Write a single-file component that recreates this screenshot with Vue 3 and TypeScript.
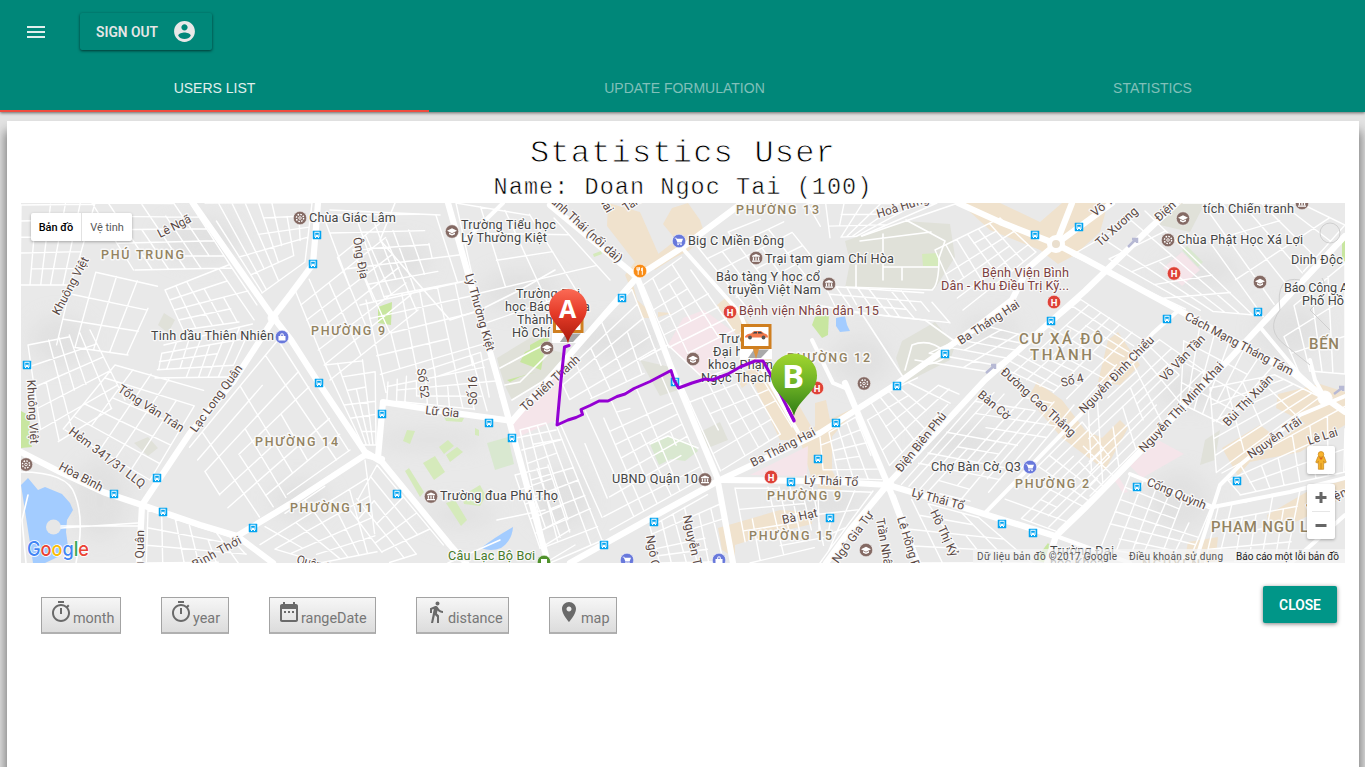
<script setup lang="ts">
type Pt = [number, number]
interface Label { t: string; x: number; y: number; w?: number; a?: number; k?: string }
interface Poi { x: number; y: number; k: string }

const tabs = ['USERS LIST', 'UPDATE FORMULATION', 'STATISTICS']
const actions = [
  { label: 'month', icon: 'timer', width: 80 },
  { label: 'year', icon: 'timer', width: 68 },
  { label: 'rangeDate', icon: 'calendar', width: 107 },
  { label: 'distance', icon: 'walk', width: 93 },
  { label: 'map', icon: 'pin', width: 68 },
]
const icons: Record<string, string> = {
  timer: 'M15 1H9v2h6V1zm-4 13h2V8h-2v6zm8.03-6.61l1.42-1.42c-.43-.51-.9-.99-1.41-1.41l-1.42 1.42C16.07 4.74 14.12 4 12 4c-4.97 0-9 4.03-9 9s4.02 9 9 9 9-4.03 9-9c0-2.12-.74-4.07-1.97-5.61zM12 20c-3.87 0-7-3.13-7-7s3.13-7 7-7 7 3.13 7 7-3.13 7-7 7z',
  calendar: 'M9 11H7v2h2v-2zm4 0h-2v2h2v-2zm4 0h-2v2h2v-2zm2-7h-1V2h-2v2H8V2H6v2H5c-1.11 0-1.99.9-1.99 2L3 20c0 1.1.89 2 2 2h14c1.1 0 2-.9 2-2V6c0-1.1-.9-2-2-2zm0 16H5V9h14v11z',
  walk: 'M13.5 5.5c1.1 0 2-.9 2-2s-.9-2-2-2-2 .9-2 2 .9 2 2 2zM9.8 8.9L7 23h2.1l1.8-8 2.1 2v6h2v-7.5l-2.1-2 .6-3C14.8 12 16.8 13 19 13v-2c-1.9 0-3.5-1-4.3-2.4l-1-1.6c-.4-.6-1-1-1.7-1-.3 0-.5.1-.8.1L6 8.3V13h2V9.6l1.8-.7',
  pin: 'M12 2C8.13 2 5 5.13 5 9c0 5.25 7 13 7 13s7-7.75 7-13c0-3.87-3.13-7-7-7zm0 9.5c-1.38 0-2.500-1.120-2.500-2.500s1.120-2.500 2.500-2.500 2.500 1.120 2.500 2.500-1.120 2.500-2.500 2.500z',
}

const thick: string[] = [
  'M193 203L273 317L291 340L318 382L365 452L382 462L450 545L466 563',
  'M273 317L290 295L313 264L318 203',
  'M273 320L233 382L190 433L142 505L139 563',
  'M21 452L60 472L103 492L142 505L200 525L237 536L273 563',
  'M237 536L290 504L365 455L382 459',
  'M378 457L383 402L440 411L512 421',
  'M448 203L498 380L548 563',
  'M512 421L580 343L638 276L683 247L742 203',
  'M550 205L637 277L671 367L717 477L733 563',
  'M570 563L640 524L720 480L820 433L898 383L982 323L1012 300L1028 268L1056 244',
  'M958 203L1000 222L1056 244L1085 259L1173 307L1293 373L1325 398L1345 412',
  'M1056 244L1072 203', 'M1056 244L1112 203',
  'M1177 203L1148 230L1085 291L985 380L888 484L850 530L826 563',
  'M720 480L820 481L888 485L965 508L1055 536',
  'M845 383L888 485L918 563',
  'M1047 563L1056 536L1085 508L1210 380L1262 324L1345 236',
]
const medium: string[] = [
  'M460 245L503 203', 'M683 249L740 313L760 365L798 432', 'M812 340L833 383L845 388',
  'M985 513L1085 410L1153 333L1180 309', 'M1213 507L1195 563', 'M1325 398L1300 375L1260 327',
  'M1325 398L1315 380L1310 360', 'M1213 507L1220 485L1240 465L1300 415L1345 396', 'M1345 478L1290 492L1213 507L1130 474',
  'M1291 563L1345 515', 'M1056 536L1130 563',
]

// Each block of side streets is a quadrilateral divided into uneven rows and columns.
const blocks: { q: [Pt, Pt, Pt, Pt]; u: number; v: number; s: number }[] = [
  { q: [[21, 205], [95, 203], [72, 285], [21, 285]], u: 5, v: 5, s: 3 },
  { q: [[92, 203], [190, 203], [232, 268], [135, 270]], u: 6, v: 5, s: 5 },
  { q: [[75, 268], [158, 285], [128, 355], [58, 345]], u: 4, v: 3, s: 8 },
  { q: [[205, 203], [312, 203], [305, 262], [262, 293]], u: 8, v: 5, s: 13 },
  { q: [[165, 290], [230, 265], [267, 318], [183, 330]], u: 6, v: 4, s: 11 },
  { q: [[164, 345], [252, 325], [228, 377], [155, 378]], u: 7, v: 4, s: 9 },
  { q: [[28, 345], [90, 330], [125, 400], [45, 450]], u: 6, v: 5, s: 4 },
  { q: [[115, 365], [205, 388], [150, 480], [65, 430]], u: 5, v: 5, s: 8 },
  { q: [[278, 340], [350, 450], [242, 530], [190, 448]], u: 7, v: 7, s: 6 },
  { q: [[295, 290], [380, 225], [418, 310], [330, 380]], u: 6, v: 6, s: 14 },
  { q: [[323, 215], [452, 215], [470, 280], [360, 305]], u: 8, v: 5, s: 21 },
  { q: [[366, 300], [473, 280], [491, 360], [384, 393]], u: 6, v: 5, s: 17 },
  { q: [[325, 365], [375, 358], [376, 445], [363, 445]], u: 4, v: 6, s: 5 },
  { q: [[388, 382], [490, 350], [507, 413], [385, 400]], u: 11, v: 4, s: 16 },
  { q: [[245, 540], [365, 460], [377, 552], [320, 563]], u: 6, v: 5, s: 12 },
  { q: [[377, 465], [443, 545], [390, 563], [350, 510]], u: 5, v: 4, s: 18 },
  { q: [[148, 510], [230, 537], [255, 563], [146, 563]], u: 6, v: 3, s: 11 },
  { q: [[456, 203], [554, 218], [610, 280], [480, 325]], u: 4, v: 4, s: 25 },
  { q: [[520, 430], [555, 422], [603, 540], [550, 563]], u: 4, v: 8, s: 22 },
  { q: [[560, 423], [661, 375], [705, 477], [610, 530]], u: 8, v: 8, s: 23 },
  { q: [[643, 285], [682, 258], [735, 330], [674, 360]], u: 4, v: 6, s: 28 },
  { q: [[556, 370], [632, 290], [662, 365], [573, 407]], u: 5, v: 5, s: 31 },
  { q: [[682, 385], [752, 362], [792, 427], [722, 470]], u: 6, v: 5, s: 33 },
  { q: [[697, 246], [775, 211], [820, 267], [746, 310]], u: 5, v: 5, s: 36 },
  { q: [[807, 203], [937, 203], [862, 236], [825, 238]], u: 7, v: 3, s: 38 },
  { q: [[825, 286], [923, 292], [950, 323], [840, 311]], u: 9, v: 3, s: 40 },
  { q: [[935, 250], [1000, 218], [1036, 252], [963, 310]], u: 6, v: 5, s: 42 },
  { q: [[915, 360], [986, 326], [1035, 338], [988, 371]], u: 5, v: 3, s: 44 },
  { q: [[860, 405], [918, 378], [960, 393], [890, 465]], u: 6, v: 4, s: 47 },
  { q: [[820, 437], [856, 418], [882, 480], [824, 478]], u: 4, v: 5, s: 49 },
  { q: [[984, 391], [1074, 405], [990, 506], [900, 484]], u: 9, v: 9, s: 53 },
  { q: [[1000, 367], [1080, 299], [1141, 338], [1080, 405]], u: 10, v: 6, s: 55 },
  { q: [[1088, 404], [1160, 340], [1210, 375], [1090, 496]], u: 8, v: 8, s: 57 },
  { q: [[994, 510], [1083, 423], [1120, 470], [1058, 530]], u: 8, v: 7, s: 60 },
  { q: [[895, 495], [978, 517], [1032, 563], [920, 563]], u: 5, v: 4, s: 65 },
  { q: [[735, 488], [812, 486], [825, 545], [750, 563]], u: 7, v: 7, s: 66 },
  { q: [[650, 527], [719, 488], [736, 563], [660, 563]], u: 6, v: 5, s: 68 },
  { q: [[818, 490], [873, 491], [833, 545], [820, 563]], u: 3, v: 3, s: 69 },
  { q: [[515, 475], [548, 465], [575, 545], [545, 563]], u: 3, v: 6, s: 71 },
  { q: [[1072, 255], [1145, 211], [1254, 315], [1185, 309]], u: 5, v: 5, s: 72 },
  { q: [[1183, 203], [1300, 203], [1345, 225], [1262, 318]], u: 6, v: 3, s: 75 },
  { q: [[1185, 320], [1272, 367], [1223, 425], [1180, 403]], u: 6, v: 4, s: 78 },
  { q: [[1210, 388], [1275, 375], [1320, 397], [1217, 472]], u: 4, v: 5, s: 82 },
  { q: [[1130, 475], [1210, 510], [1188, 563], [1100, 548]], u: 6, v: 6, s: 84 },
  { q: [[1218, 508], [1300, 490], [1288, 560], [1206, 563]], u: 6, v: 4, s: 88 },
  { q: [[1222, 473], [1345, 407], [1345, 472], [1240, 495]], u: 7, v: 3, s: 91 },
  { q: [[1277, 320], [1345, 262], [1345, 374], [1298, 370]], u: 4, v: 3, s: 92 },
]

function streets(): string {
  let d = ''
  for (const b of blocks) {
    let seed = b.s * 7919
    const rnd = () => ((seed = (seed * 16807) % 2147483647) / 2147483647)
    const at = (u: number, v: number): Pt => {
      const [a, c, e, g] = b.q
      const f = (i: 0 | 1) => (1 - v) * ((1 - u) * a[i] + u * c[i]) + v * ((1 - u) * g[i] + u * e[i])
      return [f(0), f(1)]
    }
    const seg = (p: Pt, q: Pt) => { d += `M${p[0].toFixed(1)} ${p[1].toFixed(1)}L${q[0].toFixed(1)} ${q[1].toFixed(1)}` }
    for (let i = 0; i <= b.u; i++) {
      const u = i / b.u
      const lo = rnd() < 0.55 ? 0 : Math.floor(rnd() * b.v * 0.6) / b.v
      const hi = rnd() < 0.55 ? 1 : Math.ceil(b.v * (0.5 + rnd() * 0.5)) / b.v
      seg(at(u, lo), at(Math.min(1, u + (rnd() - 0.5) * 0.05), hi))
    }
    for (let j = 0; j <= b.v; j++) {
      const v = j / b.v
      const lo = rnd() < 0.5 ? 0 : Math.floor(rnd() * b.u * 0.6) / b.u
      const hi = rnd() < 0.5 ? 1 : Math.ceil(b.u * (0.5 + rnd() * 0.5)) / b.u
      seg(at(lo, v), at(hi, Math.min(1, v + (rnd() - 0.5) * 0.05)))
    }
  }
  return d
}
const sideStreets = streets()

const areas: { p: string; k: string }[] = [
  { k: 'built', p: '608,203 640,212 662,262 630,272 637,300 658,318 658,312 672,313 655,318 643,318 625,275 635,262 607,226' },
  { k: 'built', p: '663,224 672,208 688,203 700,220 704,232 690,250 672,259 655,270 648,262 676,240' },
  { k: 'built', p: '717,305 728,296 748,322 762,345 796,400 812,428 860,405 820,450 824,478 812,480 800,440 780,440 752,380 742,388 737,378 756,365' },
  { k: 'built', p: '960,203 1000,203 1040,222 1062,203 1108,203 1100,232 1075,255 1058,264 1040,250 990,230' },
  { k: 'built', p: '718,528 780,510 812,512 812,524 770,534 735,545 735,558 722,550' },
  { k: 'built', p: '815,403 826,400 832,430 832,470 842,490 818,488 815,450' },
  { k: 'built', p: '1028,398 1037,382 1062,400 1085,430 1102,438 1120,420 1128,428 1105,470 1062,438' },
  { k: 'built', p: '1108,340 1118,332 1140,365 1120,385 1098,382' },
  { k: 'built', p: '1222,448 1260,425 1280,440 1310,420 1345,410 1345,425 1300,452 1250,462 1238,476' },
  { k: 'built', p: '1278,394 1320,384 1345,392 1345,412 1318,432 1300,420 1276,408' },
  { k: 'built', p: '1267,515 1310,490 1345,480 1345,497 1300,520 1270,532' },
  { k: 'built', p: '1188,542 1218,537 1215,563 1184,563' },
  { k: 'hospital', p: '683,318 704,310 735,333 722,342 724,365 700,375 668,345' },
  { k: 'hospital', p: '512,425 555,370 562,378 556,420 516,438' },
  { k: 'hospital', p: '750,475 808,446 807,476' },
  { k: 'hospital', p: '1163,268 1182,252 1200,270 1182,286' },
  { k: 'hospital', p: '1130,466 1158,440 1184,454 1142,478' },
  { k: 'hospital', p: '1113,478 1118,476 1128,492 1123,493' },
  { k: 'civic', p: '497,358 535,335 552,350 570,355 540,382 512,400 506,388 500,370' },
  { k: 'civic', p: '845,241 905,221 950,224 955,257 934,290 845,288 850,262' },
  { k: 'civic', p: '902,341 935,322 955,346 950,360 905,383 896,358' },
  { k: 'civic', p: '640,360 670,367 678,390 660,396' },
  { k: 'civic', p: '700,432 720,422 728,440 708,448' },
  { k: 'civic', p: '1165,203 1205,203 1190,232 1160,225' },
  { k: 'civic', p: '1205,440 1220,430 1215,460 1200,465' },
  { k: 'civic', p: '134,443 148,437 158,448 148,456' },
  { k: 'civic', p: '158,325 164,313 175,320 168,333' },
  { k: 'park', p: '378,307 392,302 391,325 378,323' },
  { k: 'park', p: '21,411 30,416 29,437 32,447 21,448' },
  { k: 'park', p: '507,380 536,372 520,377 510,382' },
  { k: 'park', p: '525,352 546,342 541,370 520,362' },
  { k: 'park', p: '530,345 550,334 548,342 530,350' },
  { k: 'soft', p: '407,430 415,431 410,444 403,441' },
  { k: 'soft', p: '439,447 448,440 454,446 444,454' },
  { k: 'soft', p: '446,455 457,447 463,452 450,462' },
  { k: 'soft', p: '423,463 435,456 445,472 434,480' },
  { k: 'soft', p: '405,471 409,468 424,492 420,497' },
  { k: 'soft', p: '462,496 480,485 486,496 480,506 464,504' },
  { k: 'soft', p: '446,503 455,500 467,520 461,526' },
  { k: 'soft', p: '922,254 938,253 939,266 923,266' },
  { k: 'soft', p: '593,254 601,251 602,254 594,257' },
  { k: 'soft', p: '444,417 464,418 462,422 446,421' },
  { k: 'soft', p: '475,428 479,430 479,436 475,435' },
  { k: 'field', p: '487,443 508,437 514,464 495,470' },
  { k: 'field', p: '650,444 670,436 694,445 698,451 685,461 671,459 659,465' },
  { k: 'field', p: '1182,250 1187,246 1203,262 1198,267' },
  { k: 'park', p: '815,317 829,312 828,335 822,338 812,325' },
  { k: 'park', p: '1342,236 1345,234 1345,262 1342,258' },
  { k: 'park', p: '1035,560 1048,543 1052,548 1046,563' },
]

const labels: Label[] = [
  { t: 'PHÚ TRUNG', x: 101, y: 259, w: 83, k: 'ward' },
  { t: 'PHƯỜNG 9', x: 311, y: 335, w: 74, k: 'ward' },
  { t: 'PHƯỜNG 14', x: 255, y: 446, w: 83, k: 'ward' },
  { t: 'PHƯỜNG 11', x: 290, y: 512, w: 82, k: 'ward' },
  { t: 'PHƯỜNG 13', x: 736, y: 214, w: 83, k: 'ward' },
  { t: 'PHƯỜNG 12', x: 787, y: 362, w: 83, k: 'ward' },
  { t: 'PHƯỜNG 9', x: 767, y: 500, w: 74, k: 'ward' },
  { t: 'PHƯỜNG 15', x: 749, y: 540, w: 83, k: 'ward' },
  { t: 'PHƯỜNG 2', x: 1015, y: 488, w: 74, k: 'ward' },
  { t: 'CƯ XÁ ĐÔ', x: 1019, y: 344, w: 84, k: 'ward big' },
  { t: 'THÀNH', x: 1030, y: 360, w: 62, k: 'ward big' },
  { t: 'BẾN', x: 1309, y: 349, w: 30, k: 'ward big' },
  { t: 'PHẠM NGŨ L', x: 1211, y: 532, w: 97, k: 'ward big' },
  { t: 'NGUYEN', x: 1142, y: 568, w: 58, k: 'ward' },
  { t: 'Tinh dầu Thiên Nhiên', x: 151, y: 340, w: 123 },
  { t: 'Chùa Giác Lâm', x: 309, y: 222, w: 87 },
  { t: 'Trường Tiểu học', x: 461, y: 229, w: 95 },
  { t: 'Lý Thường Kiệt', x: 461, y: 242, w: 86 },
  { t: 'Trường Đại', x: 516, y: 298, w: 64 },
  { t: 'học Bách Khoa', x: 505, y: 311, w: 85 },
  { t: 'Thành phố', x: 517, y: 324, w: 60 },
  { t: 'Hồ Chí Minh', x: 512, y: 337, w: 70 },
  { t: 'Big C Miền Đông', x: 688, y: 245, w: 96 },
  { t: 'Trại tạm giam Chí Hòa', x: 765, y: 263, w: 129 },
  { t: 'Bảo tàng Y học cổ', x: 716, y: 281, w: 104 },
  { t: 'truyền Việt Nam', x: 728, y: 294, w: 93 },
  { t: 'Bệnh viện Nhân dân 115', x: 739, y: 315, w: 140, k: 'health' },
  { t: 'Trường', x: 719, y: 343, w: 43 },
  { t: 'Đại học Y', x: 713, y: 356, w: 55 },
  { t: 'khoa Phạm', x: 708, y: 369, w: 65 },
  { t: 'Ngọc Thạch', x: 701, y: 382, w: 70 },
  { t: 'Bệnh Viện Bình', x: 982, y: 277, w: 87, k: 'health' },
  { t: 'Dân - Khu Điều Trị Kỹ...', x: 941, y: 290, w: 128, k: 'health' },
  { t: 'Chợ Bàn Cờ, Q3', x: 931, y: 471, w: 90 },
  { t: 'UBND Quận 10', x: 612, y: 483, w: 86 },
  { t: 'Trường đua Phú Thọ', x: 440, y: 500, w: 118 },
  { t: 'Câu Lạc Bộ Bơi', x: 448, y: 560, w: 87, k: 'leisure' },
  { t: 'tích Chiến tranh', x: 1203, y: 213, w: 91 },
  { t: 'Chùa Phật Học Xá Lợi', x: 1177, y: 244, w: 126 },
  { t: 'Dinh Độc', x: 1291, y: 264, w: 52 },
  { t: 'Báo Công An', x: 1284, y: 292, w: 71 },
  { t: 'Phố Hồ', x: 1302, y: 305, w: 42 },
  { t: 'Trường Đại', x: 1050, y: 555, w: 64 },
  { t: 'học Khoa', x: 1050, y: 567, w: 54 },
  { t: 'Lê Ngã', x: 160, y: 238, w: 36, a: -27, k: 'road' },
  { t: 'Khuông Việt', x: 59, y: 316, w: 64, a: -62, k: 'road' },
  { t: 'Khuông Việt', x: 27, y: 380, w: 64, a: 87, k: 'road' },
  { t: 'Tổng Văn Trân', x: 117, y: 391, w: 76, a: 33, k: 'road' },
  { t: 'Hẻm 341/31 LLQ', x: 68, y: 433, w: 92, a: 37, k: 'road' },
  { t: 'Lạc Long Quân', x: 196, y: 433, w: 80, a: -54, k: 'road' },
  { t: 'Hòa Bình', x: 58, y: 469, w: 48, a: 28, k: 'road' },
  { t: 'Long Quân', x: 143, y: 589, w: 59, a: -89, k: 'road' },
  { t: 'Bình Thới', x: 195, y: 569, w: 54, a: -29, k: 'road' },
  { t: 'Quân Sự', x: 296, y: 563, w: 42, a: 15, k: 'road' },
  { t: 'Ông Địa', x: 353, y: 238, w: 42, a: 80, k: 'road' },
  { t: 'Lý Thường Kiệt', x: 465, y: 275, w: 80, a: 74, k: 'road' },
  { t: 'Số 52', x: 417, y: 369, w: 30, a: 82, k: 'road' },
  { t: 'Số 16', x: 477, y: 405, w: 29, a: -90, k: 'road' },
  { t: 'Lữ Gia', x: 425, y: 414, w: 34, a: 6, k: 'road' },
  { t: 'Tô Hiến Thành', x: 525, y: 412, w: 76, a: -43, k: 'road' },
  { t: 'Thành Thái (nối dài)', x: 540, y: 193, w: 105, a: 42, k: 'road' },
  { t: 'Đồng Nai', x: 583, y: 172, w: 48, a: 60, k: 'road' },
  { t: 'Tam Đảo', x: 626, y: 212, w: 45, a: -33, k: 'road' },
  { t: 'Hoà Hưng', x: 878, y: 218, w: 54, a: -17, k: 'road' },
  { t: 'Ba Tháng Hai', x: 961, y: 345, w: 71, a: -33, k: 'road' },
  { t: 'Ba Tháng Hai', x: 753, y: 467, w: 71, a: -27, k: 'road' },
  { t: 'Lý Thái Tổ', x: 804, y: 484, w: 54, a: 2, k: 'road' },
  { t: 'Lý Thái Tổ', x: 911, y: 496, w: 54, a: 15, k: 'road' },
  { t: 'Điện Biên Phủ', x: 901, y: 473, w: 73, a: -51, k: 'road' },
  { t: 'Bàn Cờ', x: 977, y: 396, w: 38, a: 40, k: 'road' },
  { t: 'Đường Cao Thắng', x: 1000, y: 373, w: 96, a: 42, k: 'road' },
  { t: 'Số 4', x: 1062, y: 387, w: 23, a: -14, k: 'road' },
  { t: 'Ngô Gia Tự', x: 838, y: 564, w: 61, a: -54, k: 'road' },
  { t: 'Trần Nhân Tôn', x: 876, y: 519, w: 76, a: 80, k: 'road' },
  { t: 'Lê Hồng Phong', x: 897, y: 518, w: 79, a: 73, k: 'road' },
  { t: 'Hồ Thị Kỷ', x: 930, y: 512, w: 50, a: 65, k: 'road' },
  { t: 'Ngô Quyền', x: 646, y: 536, w: 58, a: 80, k: 'road' },
  { t: 'Nguyễn Tri', x: 683, y: 516, w: 58, a: 78, k: 'road' },
  { t: 'Bà Hạt', x: 783, y: 524, w: 36, a: -12, k: 'road' },
  { t: 'Võ Thị Sáu', x: 1095, y: 217, w: 58, a: -38, k: 'road' },
  { t: 'Tú Xương', x: 1100, y: 247, w: 52, a: -42, k: 'road' },
  { t: 'Điện Biên', x: 1159, y: 222, w: 50, a: -42, k: 'road' },
  { t: 'Cách Mạng Tháng Tám', x: 1184, y: 319, w: 121, a: 28, k: 'road' },
  { t: 'Võ Văn Tần', x: 1165, y: 382, w: 59, a: -46, k: 'road' },
  { t: 'Nguyễn Đình Chiểu', x: 1084, y: 414, w: 102, a: -46, k: 'road' },
  { t: 'Nguyễn Thị Minh Khai', x: 1144, y: 453, w: 118, a: -47, k: 'road' },
  { t: 'Bùi Thị Xuân', x: 1228, y: 427, w: 66, a: -46, k: 'road' },
  { t: 'Nguyễn Trãi', x: 1251, y: 459, w: 63, a: -35, k: 'road' },
  { t: 'Lê Lai', x: 1309, y: 445, w: 31, a: -18, k: 'road' },
  { t: 'Cống Quỳnh', x: 1146, y: 485, w: 63, a: 23, k: 'road' },
  { t: 'Nguyện', x: 1309, y: 513, w: 43, a: -25, k: 'road' },
]

const pois: Poi[] = [
  { x: 300, y: 218, k: 'temple' }, { x: 452, y: 231.500, k: 'school' }, { x: 547, y: 348, k: 'school' },
  { x: 693, y: 359, k: 'school' }, { x: 756, y: 258, k: 'museum' }, { x: 829, y: 284, k: 'museum' },
  { x: 864, y: 383.500, k: 'temple' }, { x: 431, y: 496.500, k: 'museum' }, { x: 705, y: 479.500, k: 'museum' },
  { x: 26, y: 464.500, k: 'temple' }, { x: 866, y: 550, k: 'school' }, { x: 1168, y: 240, k: 'temple' },
  { x: 1183, y: 218.500, k: 'school' }, { x: 1260, y: 282, k: 'school' }, { x: 1302, y: 203, k: 'museum' },
  { x: 282, y: 337, k: 'bag' }, { x: 679, y: 241, k: 'cart' }, { x: 627, y: 560, k: 'cart' },
  { x: 719, y: 560, k: 'bag' }, { x: 1030, y: 467, k: 'cart' }, { x: 640, y: 271, k: 'food' },
  { x: 730, y: 312, k: 'hosp' }, { x: 817, y: 388, k: 'hosp' }, { x: 771, y: 477, k: 'hosp' },
  { x: 1054, y: 302, k: 'hosp' }, { x: 1174, y: 273.500, k: 'hosp' }, { x: 544, y: 562, k: 'green' },
]
const buses: Pt[] = [
  [27, 365], [114, 494], [157, 478], [163, 512], [253, 528], [317, 235], [313, 264], [319, 383], [382, 414],
  [489, 423], [512, 438], [397, 494], [622, 298], [675, 382], [654, 522], [604, 545], [836, 423], [818, 459],
  [791, 482], [830, 518], [945, 354], [897, 386], [1051, 321], [1035, 235], [1079, 227], [1167, 319],
  [1258, 312], [1137, 487], [1237, 481], [1002, 524], [1033, 533],
]
const hills: [number, number, number, number][] = [
  [100, 500, 28, 40], [200, 240, 40, 22], [60, 340, 30, 24], [430, 440, 55, 10], [460, 515, 35, 12], [860, 360, 30, 24],
  [520, 290, 40, 20], [610, 340, 50, 18], [990, 330, 30, 14], [1190, 390, 30, 18], [1290, 330, 34, 24], [820, 500, 40, 18],
  [560, 500, 30, 30], [1200, 270, 40, 14], [300, 500, 30, 20], [400, 260, 30, 20], [1180, 500, 30, 30], [960, 440, 40, 14],
]
const streetClass = (k?: string) => ['label', ...(k ? k.split(' ') : [])]
</script>

<template>
  <div class="page">
    <header class="header">
      <div class="toolbar">
        <svg class="menu" viewBox="0 0 24 24"><path d="M3 18h18v-2H3v2zm0-5h18v-2H3v2zm0-7v2h18V6H3z" /></svg>
        <button class="signout">
          <span>SIGN OUT</span>
          <svg viewBox="0 0 24 24"><path d="M12 2C6.480 2 2 6.480 2 12s4.480 10 10 10 10-4.480 10-10S17.520 2 12 2zm0 3c1.660 0 3 1.340 3 3s-1.340 3-3 3-3-1.340-3-3 1.340-3 3-3zm0 14.200c-2.500 0-4.710-1.280-6-3.220.030-1.990 4-3.080 6-3.080 1.990 0 5.970 1.090 6 3.080-1.290 1.940-3.500 3.220-6 3.220z" /></svg>
        </button>
      </div>
      <nav class="tabs">
        <a v-for="(t, i) in tabs" :key="t" class="tab" :class="{ active: i === 0 }">{{ t }}</a>
      </nav>
    </header>

    <main class="card">
      <h1>Statistics User</h1>
      <h2>Name: Doan Ngoc Tai (100)</h2>

      <div class="map">
        <svg class="canvas" viewBox="21 203 1324 360" width="1324" height="360">
          <defs>
            <filter id="blur" x="-50%" y="-50%" width="200%" height="200%"><feGaussianBlur stdDeviation="10" /></filter>
            <linearGradient id="red" x1="0" y1="0" x2="0" y2="1"><stop offset="0" stop-color="#fb6a55" /><stop offset="0.45" stop-color="#e53b28" /><stop offset="1" stop-color="#a81b0c" /></linearGradient>
            <linearGradient id="green" x1="0" y1="0" x2="0" y2="1"><stop offset="0" stop-color="#a2d62f" /><stop offset="0.5" stop-color="#6cb024" /><stop offset="1" stop-color="#2f7d14" /></linearGradient>
            <symbol id="bus" viewBox="0 0 10 10"><rect width="10" height="10" rx="1" fill="#03a4f0" /><path d="M2.200 1.500h5.600v5.700h-.6v1H6v-1H4v1H2.800v-1h-.6z" fill="#fff" /><path d="M3 2.600h4v2H3z M3 5.500h1v1H3z M6 5.500h1v1H6z" fill="#03a4f0" /></symbol>
          </defs>
          <rect x="21" y="203" width="1324" height="360" fill="#e9e9e9" />
          <g filter="url(#blur)" fill="#d9d9d9" opacity="0.5">
            <ellipse v-for="(h, i) in hills" :key="i" :cx="h[0]" :cy="h[1]" :rx="h[2]" :ry="h[3]" />
          </g>
          <polygon v-for="(a, i) in areas" :key="'a' + i" :points="a.p" :class="a.k" />
          <g fill="#a3ccff">
            <path d="M21 485L28 478L38 490L45 487L62 494L70 503L73 510L67 520L66 532L68 546L60 556L45 563H33L28 530Z" />
            <path d="M481 548Q495 537 513 527Q512 541 501 548Q491 552 481 548Z" />
            <path d="M836 318L845 316L847 325L850 331L840 332L836 326Z" />
          </g>
          <circle cx="53.500" cy="527" r="7.500" fill="#e7e7e7" />
          <g fill="none" stroke="#fff" stroke-linecap="round" stroke-linejoin="round">
            <path :d="sideStreets" stroke-width="1.400" />
            <g stroke-width="1.600">
              <path d="M61 526H138 M61 528L138 523 M21 472Q68 472 75 495Q85 520 76 563 M28 495L22 520L26 563" />
              <path d="M846 287L932 290Q939 285 939 258L945 241L906 220 M860 241L931 232 M883 234V280 M856 265V287 M884 267H938 M902 268V280 M816 305L870 314L925 320L960 345 M862 314L905 380 M905 370L912 345Q930 338 945 352Q948 362 922 365 M862 236L958 203" />
              <path d="M500 368L530 352L548 343 M512 400L545 380L575 360 M505 385L520 382L552 350 M516 438L556 430 M522 450L560 440 M640 360L668 345L700 375 M650 444L668 436L698 448" />
              <path d="M448 563L500 540 M497 520L545 510 M440 215L330 210 M395 203L380 240L450 320L480 310L520 290L555 270" />
            </g>
            <path v-for="(d, i) in medium" :key="'m' + i" :d="d" stroke-width="4" />
            <path v-for="(d, i) in thick" :key="'t' + i" :d="d" stroke-width="6.200" />
            <circle cx="1056" cy="244" r="6.500" stroke-width="5" fill="#eadfce" />
            <circle cx="888" cy="485" r="6" fill="#fff" />
            <circle cx="273" cy="318" r="5" fill="#fff" />
            <circle cx="1325" cy="398" r="7" fill="#fff" />
          </g>
          <g fill="none" stroke="#cfcfcf" stroke-width="1"><circle cx="1330" cy="233" r="10" /><path d="M1300 280Q1275 275 1280 310Q1265 330 1285 345L1310 365M1322 278Q1330 290 1310 310L1330 330" /></g>
          <g stroke="#b7b9d4" stroke-width="2.500" fill="none"><path d="M986 373L994 366M991 365h4v4M1128 247L1136 239M1132 239h5v4M1334 394L1342 388M1339 387h4v4" /></g>

          <use v-for="(b, i) in buses" :key="'b' + i" href="#bus" :x="b[0] - 4.500" :y="b[1] - 4.500" width="9" height="9" />

          <text
            v-for="(l, i) in labels" :key="'l' + i" :class="streetClass(l.k)" :textLength="l.w"
            :transform="`translate(${l.x} ${l.y}) rotate(${l.a ?? 0})`"
          >{{ l.t }}</text>

          <g v-for="(p, i) in pois" :key="'p' + i" :transform="`translate(${p.x} ${p.y})`">
            <circle r="6.700" :class="['poi', p.k]" />
            <g v-if="p.k === 'temple'" fill="none" stroke="#fff"><circle r="3.600" stroke-width="1.400" stroke-dasharray="1.600 1.200" /><circle r="1.300" stroke-width="0.900" /></g>
            <path v-else-if="p.k === 'school'" d="M0 -3.300L5 -0.800L0 1.700L-5 -0.800Z M-3 1L0 2.500L3 1V2.700L0 4L-3 2.700Z" fill="#fff" />
            <path v-else-if="p.k === 'museum'" d="M-4 -1.200V-2.200L0 -4L4 -2.200V-1.200Z M-3.200 -.7H-1.900V2.200H-3.200Z M-.65 -.7H.65V2.200H-.65Z M1.900 -.7H3.200V2.200H1.900Z M-4 2.600H4V3.700H-4Z" fill="#fff" />
            <path v-else-if="p.k === 'bag'" d="M-3.500 -1H-1.800V-2Q-1.800 -3.800 0 -3.800Q1.800 -3.800 1.800 -2V-1H3.500V3.500H-3.500Z M-.8 -1H.8V-2Q.8 -2.700 0 -2.700Q-.8 -2.700 -.8 -2Z" fill="#fff" fill-rule="evenodd" />
            <path v-else-if="p.k === 'cart'" d="M-4.300 -3.300H-2.700L-2.300 -2.300H4L2.700 1.200H-1.700L-3.200 -2.400H-4.300Z M-2 1.800H2.800V2.500H-2Z M-1.700 3.500a.8 .8 0 1 0 1.600 0a.8 .8 0 1 0 -1.600 0 M1.200 3.500a.8 .8 0 1 0 1.600 0a.8 .8 0 1 0 -1.600 0" fill="#fff" />
            <path v-else-if="p.k === 'food'" d="M-3 -3.800V-.8M-1.800 -3.800V3.800M-.6 -3.800V-.8M-3 -1H-.6M2.300 -3.500V3.800M1.700 -3V0" stroke="#fff" stroke-width="1" fill="none" />
            <text v-else-if="p.k === 'hosp'" class="h" y="3.500">H</text>
            <rect v-else x="-3" y="-3" width="6" height="5" fill="#fff" />
          </g>

          <g v-for="c in [[553, 308], [741, 324]]" :key="c[0]" :transform="`translate(${c[0]} ${c[1]})`">
            <path d="M-1 25H31V35H-1Z" fill="#fff" />
            <path d="M7 34L13 25.500H28L20 34Z" fill="#a9a9a9" />
            <path d="M12 25H18L15 35Z" fill="#dc9440" />
            <rect x="1.500" y="1.500" width="27.500" height="22" fill="#fff" stroke="#cf7f20" stroke-width="3" />
            <path d="M4 12.500Q6 9.500 10 9.500L13 7H20L23.500 9.500Q27 10 27 13.500H4Z" fill="#f4794c" />
            <path d="M11.500 9.500L13.500 7.800H16V9.500ZM17 7.800H19.600L22 9.500H17Z" fill="#38444d" />
            <circle cx="9" cy="13.500" r="1.900" fill="#555" /><circle cx="22.500" cy="13.500" r="1.900" fill="#555" />
          </g>

          <path d="M569 345.500L564.500 347L561 380L557 425L568 420L576 417.500L582.500 414.500L581 409.500L590 405.500L599 401L608 401L617 396.500L625 394L634 388.500L650 381.500L671 370.500L674 380L678.500 388L692 383L705 379L712 380L728 374L740 367L755 361H763L772 377L794 421" fill="none" stroke="#9400d3" stroke-width="3" stroke-linejoin="round" stroke-linecap="round" />

          <path d="M568 343C564 328 549 323 549 307.500A19 18.500 0 0 1 587 307.500C587 323 572 328 568 343Z" fill="url(#red)" />
          <text class="pinletter" x="567.500" y="317.500">A</text>
          <path d="M794 416C789 398 771 393 771 375.500A23 22 0 0 1 817 375.500C817 393 799 398 794 416Z" fill="url(#green)" />
          <path d="M788 409L794 420" stroke="#9400d3" stroke-width="3" stroke-linecap="round" fill="none" />
          <text class="pinletter large" x="793" y="388">B</text>

          <text class="google" x="27" y="556" textLength="62" lengthAdjust="spacingAndGlyphs"><tspan fill="#4285f4">G</tspan><tspan fill="#ea4335">o</tspan><tspan fill="#fbbc05">o</tspan><tspan fill="#4285f4">g</tspan><tspan fill="#34a853">l</tspan><tspan fill="#ea4335">e</tspan></text>
          <rect x="973" y="549" width="372" height="14" fill="#f5f5f5" opacity="0.72" />
          <g class="legal">
            <text x="977" y="560" textLength="140">Dữ liệu bản đồ ©2017 Google</text>
            <text x="1129" y="560" textLength="94">Điều khoản sử dụng</text>
            <text class="dark" x="1236" y="560" textLength="103">Báo cáo một lỗi bản đồ</text>
          </g>
        </svg>
        <div class="types"><span class="on">Bản đồ</span><span>Vệ tinh</span></div>
        <div class="pegman">
          <svg viewBox="0 0 16 22" width="14" height="21"><path d="M4.500 6.500H11.500L14 13L12 14L11 11.500V21H5V11.500L4 14L2 13Z" fill="#f4b22c" stroke="#c9861b" stroke-width=".8" /><circle cx="8" cy="4" r="3.200" fill="#f9b32c" stroke="#c9861b" stroke-width=".8" /><path d="M5.500 7.500L8 10.500L10.500 7.500Z" fill="#d9641e" /><path d="M8 14V21" stroke="#c9861b" /></svg>
        </div>
        <div class="zoom">
          <svg viewBox="0 0 28 27"><path d="M8.500 12h4v-4h3v4h4v3h-4v4h-3v-4h-4z" /></svg>
          <i></i>
          <svg viewBox="0 0 28 27"><path d="M8.500 12h11v3h-11z" /></svg>
        </div>
      </div>

      <div class="footer">
        <div class="actions">
          <button v-for="a in actions" :key="a.label" class="action" :style="{ width: a.width + 'px' }">
            <svg viewBox="0 0 24 24"><path :d="icons[a.icon]" /></svg><span>{{ a.label }}</span>
          </button>
        </div>
        <button class="close">CLOSE</button>
      </div>
    </main>
  </div>
</template>

<style>
html, body { margin: 0; height: 767px; overflow: hidden; }
</style>

<style scoped>
.page { height: 767px; overflow: hidden; background: #e2e2e2; font-family: Roboto, "Liberation Sans", sans-serif; }
button { font: inherit; margin: 0; }
.header { position: relative; height: 112px; background: #008779; box-shadow: 0 1px 3px rgba(0, 0, 0, .55); }
.toolbar { display: flex; align-items: center; height: 64px; padding-left: 24px; box-sizing: border-box; }
.menu { width: 24px; height: 24px; fill: #e0eeec; }
.signout { display: flex; align-items: center; justify-content: space-between; width: 132px; height: 37px; margin-left: 32px; margin-top: -1px; padding: 0 16px; border: 0; border-radius: 2px; background: #008779; color: #e6e6e6; font-size: 13.800px; font-weight: 600; box-shadow: 0 1px 3px rgba(0, 0, 0, .6); }
.signout svg { width: 25px; height: 25px; margin-right: -1px; fill: #e8e8e8; }
.tabs { display: grid; grid-template-columns: 429px 511px 425px; height: 48px; }
.tab { display: flex; align-items: center; justify-content: center; box-sizing: border-box; padding-top: 1px; border-bottom: 2px solid transparent; color: #80c0b9; font-family: "Liberation Sans", sans-serif; font-size: 14px; }
.tab.active { color: #e1efed; border-color: #ef4b3e; }
.card { box-sizing: border-box; height: 660px; margin: 9px 6px 0 7px; padding: 0 14px; background: #fff; box-shadow: 0 12px 10px 2px rgba(0, 0, 0, .45); }
h1, h2 { margin: 0; text-align: center; font-family: "Liberation Mono", monospace; font-weight: 400; color: #000; }
h1 { height: 51px; padding-top: 13px; box-sizing: border-box; font-size: 32px; letter-spacing: 1.200px; line-height: 39px; -webkit-text-stroke: .9px #fff; }
h2 { height: 31px; font-size: 23.500px; letter-spacing: 1.050px; line-height: 31px; -webkit-text-stroke: .5px #fff; }
.map { position: relative; width: 1324px; height: 360px; overflow: hidden; }
.canvas { display: block; }
.built { fill: #f0e2cd; }
.hospital { fill: #f5e5ea; }
.civic { fill: #e0e1d9; }
.park { fill: #c8e6a0; }
.soft { fill: #d5eabb; }
.field { fill: #d9e8d0; }
.label { font: 400 12.700px Roboto, sans-serif; fill: #454545; stroke: #f8f8f8; stroke-width: 2.500px; stroke-linejoin: round; paint-order: stroke; }
.label.road { font-size: 12px; fill: #594743; }
.label.ward { font-size: 12.500px; font-weight: 500; fill: #938361; stroke-width: 3px; }
.label.big { font-size: 15px; }
.label.health { fill: #7d4040; }
.label.leisure { fill: #477a29; }
.poi { fill: #846a64; stroke: #fff; stroke-width: .5px; }
.poi.bag, .poi.cart { fill: #6878db; }
.poi.food { fill: #f98c16; }
.poi.hosp { fill: #de4137; }
.poi.green { fill: #50912c; }
.h { font: 700 9.500px Roboto, sans-serif; text-anchor: middle; fill: #fff; }
.pinletter { font: 700 25px "Open Sans", sans-serif; text-anchor: middle; fill: #fff; }
.pinletter.large { font-size: 33px; }
.google { font: 500 20px Inter, sans-serif; stroke: #fff; stroke-width: 1.500px; paint-order: stroke; }
.legal { font: 400 10px Roboto, sans-serif; fill: #555; }
.legal .dark { fill: #222; }
.types { position: absolute; left: 10px; top: 10px; display: flex; height: 28px; background: #fff; border-radius: 2px; box-shadow: 0 1px 3px rgba(0, 0, 0, .3); }
.types span { width: 50px; line-height: 29px; text-align: center; font-size: 11px; color: #5a5a5a; }
.types .on { color: #000; font-weight: 500; border-right: 1px solid #e2e2e2; }
.pegman, .zoom { position: absolute; left: 1286px; width: 28px; background: #fff; border-radius: 2px; box-shadow: 0 1px 3px rgba(0, 0, 0, .3); }
.pegman { top: 243px; display: flex; height: 28px; align-items: center; justify-content: center; }
.zoom { top: 281px; height: 55px; }
.zoom svg { display: block; width: 28px; height: 27px; fill: #666; }
.zoom i { display: block; height: 1px; margin: 0 5px; background: #e6e6e6; }
.footer { display: flex; justify-content: space-between; padding: 23px 8px 0 20px; }
.actions { display: flex; align-items: flex-start; gap: 40px; padding-top: 11px; }
.action { display: flex; align-items: flex-start; height: 37px; box-sizing: border-box; padding: 2px 0 0 7px; border: 1px solid #a3a3a3; border-bottom: 2px solid #b0b0b0; background: linear-gradient(#f6f6f6, #dcdcdc); color: #777; font-size: 14.400px; font-weight: 400; }
.action svg { flex: none; width: 24px; height: 24px; fill: #6a6a6a; }
.action span { line-height: 18px; margin-top: 10px; }
.close { width: 74px; height: 37px; border: 0; border-radius: 2px; background: #009688; color: #fff; font-size: 13.800px; font-weight: 600; padding: 0; box-shadow: 0 1px 4px rgba(0, 0, 0, .5); }
</style>
